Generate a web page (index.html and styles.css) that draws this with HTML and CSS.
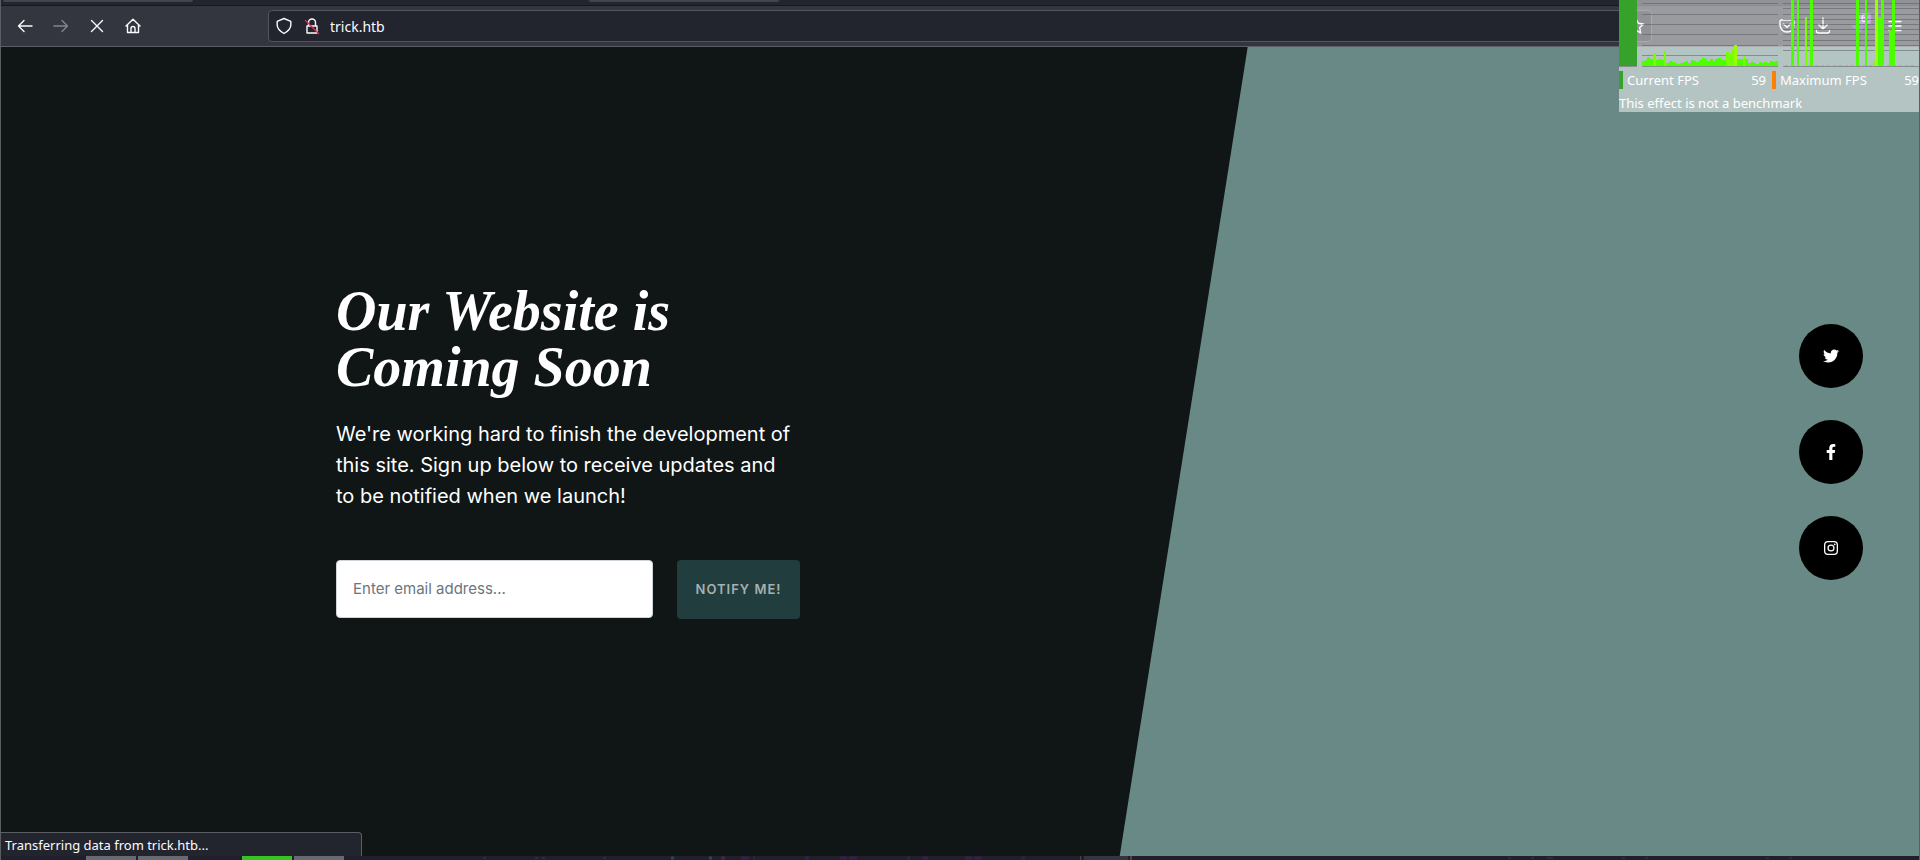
FILE: index.html
```html
<!DOCTYPE html>
<html lang="en">
<head>
<meta charset="utf-8">
<title>trick.htb</title>
<link rel="stylesheet" href="styles.css">
</head>
<body>
<div class="window">
  <div class="tabstrip"><span class="tab"></span><span class="tab tab-active"></span></div>
  <header class="toolbar">
    <nav class="nav" aria-label="Browser">
      <button class="tool" aria-label="Back"><svg viewBox="0 0 16 16"><path d="M15 8H1.500M7 2.500L1.500 8 7 13.500"/></svg></button>
      <button class="tool tool-off" aria-label="Forward"><svg viewBox="0 0 16 16"><path d="M1 8h13.500M9 2.500L14.500 8 9 13.500"/></svg></button>
      <button class="tool" aria-label="Stop"><svg viewBox="0 0 16 16"><path d="M2.500 2.500l11 11M13.500 2.500l-11 11"/></svg></button>
      <button class="tool" aria-label="Home"><svg viewBox="0 0 16 16"><path d="M1 8L8 1.200 15 8M2.500 7v7.500h11V7M6 14.500v-4a2 2 0 0 1 4 0v4"/></svg></button>
    </nav>
    <div class="urlbar">
      <svg class="icon" viewBox="0 0 16 16"><path d="M8 .5L14.800 3.300V7c0 4-3.200 6.500-6.800 8.500C4.400 13.500 1.200 11 1.200 7V3.300z"/></svg>
      <svg class="icon" viewBox="0 0 16 16"><path d="M4.500 8V4.500a3.500 3.500 0 0 1 7 0V8M3 8h10v7H3z"/><path class="strike" d="M1.500 2.500l13 13"/></svg>
      <input class="url" aria-label="Address" value="trick.htb">
      <button class="tool star" aria-label="Bookmark"><svg viewBox="0 0 16 16"><path d="M8 .5l2.300 4.800 5.200.7-3.800 3.600 1 5.200L8 12.300l-4.700 2.500 1-5.200L.5 6l5.200-.7z"/></svg></button>
    </div>
    <div class="actions">
      <button class="tool" aria-label="Pocket"><svg viewBox="0 0 16 16"><path d="M2.500 2h11a1.500 1.500 0 0 1 1.500 1.500V7A7 7 0 0 1 1 7V3.500A1.500 1.500 0 0 1 2.500 2zM4.500 6L8 9.300 11.500 6"/></svg></button>
      <button class="tool" aria-label="Downloads"><svg viewBox="0 0 16 16"><path d="M8 0v10.500M3.500 6.500L8 11l4.500-4.500M1.500 12.500v.5a2 2 0 0 0 2 2h9a2 2 0 0 0 2-2v-.5"/></svg></button>
      <button class="tool" aria-label="Extension"><svg viewBox="0 0 16 16"><path class="ext" d="M0 8l4-2 3-3 3 3 5 2-4 3-1 3-3 1-3-4z"/><rect class="ext-badge" x="8" y="-5" width="12" height="11" rx="2"/><text class="ext-num" x="10" y="4">6</text></svg></button>
      <button class="tool" aria-label="Menu"><svg viewBox="0 0 16 16"><path d="M2 3.500h12M2 8h12M2 12.500h12"/></svg></button>
    </div>
  </header>
  <main class="page">
    <section class="masthead">
      <div class="content">
        <h1 class="title">Our Website is Coming Soon</h1>
        <p class="lead">We're working hard to finish the development of this site. Sign up below to receive updates and to be notified when we launch!</p>
        <form class="signup">
          <input class="email" type="email" aria-label="Email address" placeholder="Enter email address...">
          <button class="notify" type="button">Notify Me!</button>
        </form>
      </div>
    </section>
    <aside class="social">
      <a class="social-link" href="#" aria-label="Twitter"><svg viewBox="0 0 512 512"><path d="M459.370 151.716c.325 4.548.325 9.097.325 13.645 0 138.720-105.583 298.558-298.558 298.558-59.452 0-114.680-17.219-161.137-47.106 8.447.974 16.568 1.299 25.340 1.299 49.055 0 94.213-16.568 130.274-44.832-46.132-.975-84.792-31.188-98.112-72.772 6.498.974 12.995 1.624 19.818 1.624 9.421 0 18.843-1.300 27.614-3.573-48.081-9.747-84.143-51.980-84.143-102.985v-1.299c13.969 7.797 30.214 12.670 47.431 13.319-28.264-18.843-46.781-51.005-46.781-87.391 0-19.492 5.197-37.360 14.294-52.954 51.655 63.675 129.300 105.258 216.365 109.807-1.624-7.797-2.599-15.918-2.599-24.040 0-57.828 46.782-104.934 104.934-104.934 30.213 0 57.502 12.670 76.670 33.137 23.715-4.548 46.456-13.320 66.599-25.340-7.798 24.366-24.366 44.833-46.132 57.827 21.117-2.273 41.584-8.122 60.426-16.243-14.292 20.791-32.161 39.308-52.628 54.253z"/></svg></a>
      <a class="social-link" href="#" aria-label="Facebook"><svg viewBox="0 0 320 512"><path d="M279.140 288l14.220-92.660h-88.910v-60.130c0-25.350 12.420-50.060 52.240-50.060h40.420V6.260S260.430 0 225.360 0c-73.220 0-121.080 44.380-121.080 124.720v70.620H22.890V288h81.390v224h100.170V288z"/></svg></a>
      <a class="social-link" href="#" aria-label="Instagram"><svg viewBox="0 0 16 16"><path fill-rule="evenodd" d="M5 1h6a4 4 0 0 1 4 4v6a4 4 0 0 1-4 4H5a4 4 0 0 1-4-4V5a4 4 0 0 1 4-4zm0 1.300A2.700 2.700 0 0 0 2.300 5v6A2.700 2.700 0 0 0 5 13.700h6a2.700 2.700 0 0 0 2.700-2.700V5A2.700 2.700 0 0 0 11 2.300zM8 4.400a3.600 3.600 0 1 1 0 7.200 3.600 3.600 0 0 1 0-7.200zm0 1.300a2.300 2.300 0 1 0 0 4.600 2.300 2.300 0 0 0 0-4.600z"/><circle cx="11.700" cy="4.300" r=".9"/></svg></a>
    </aside>
    <div class="status">Transferring data from trick.htb...</div>
  </main>
  <footer class="desktop">
    <span class="task"></span><span class="task"></span><span class="task task-on"></span><span class="task"></span>
    <svg class="marks" viewBox="345 0 1574 4" preserveAspectRatio="xMinYMin slice" aria-hidden="true">
      <path stroke="#3a3c48" d="M482 2h3M534 2h3M541 2h3M602 2h3M1507 2h3M1530 2h3M1546 2h6M1621 2h3M1644 2h3M1765 2h3M1788 2h3"/>
      <path stroke="#2a4a50" stroke-width="3" d="M670 2h3M708 2h3"/>
      <path stroke="#4a2835" stroke-width="3" d="M720 2h4"/>
      <path stroke="#35204a" stroke-width="3" d="M740 2h8M752 2h2M804 2h4M839 2h7M848 2h8M906 2h3M921 2h6M964 2h7M973 2h8M1021 2h3"/>
      <path stroke="#4a4b58" d="M1083 1h44M1083 3h44"/>
      <path stroke="#54423e" stroke-width="4" d="M1079 2h1M1129 2h2"/>
    </svg>
  </footer>
</div>
<div class="fps">
  <svg class="graph" id="graph" viewBox="0 0 300 67" aria-hidden="true"></svg>
  <div class="legend">
    <div class="entry"><span class="key"></span><span>Current FPS</span><span class="num">59</span></div>
    <div class="entry"><span class="key key-max"></span><span>Maximum FPS</span><span class="num">59</span></div>
  </div>
  <div class="note">This effect is not a benchmark</div>
</div>
<script src="graph.js"></script>
</body>
</html>
```
FILE: styles.css
```css
* { box-sizing: border-box; }
body { margin: 0; font-family: "Noto Sans", sans-serif; font-size: 13px; color: #fbfbfe; }
button, input { font: inherit; color: inherit; border: 0; padding: 0; background: none; }
.window { display: flex; flex-direction: column; height: 100vh; border: solid #5a5d61; border-width: 0 1px; background: #101616; }
.tabstrip { display: flex; gap: 396px; height: 6px; padding-left: 2px; background: #23252e; border-bottom: 1px solid #17181e; flex: none; }
.tab { width: 190px; height: 2px; background: #42444d; border-radius: 0 0 4px 4px; }
.toolbar { display: flex; align-items: center; height: 41px; flex: none; background: #33363e; border-bottom: 1px solid #5b5e64; padding: 0 16px; }
.nav { display: flex; gap: 20px; }
.tool { display: block; width: 16px; height: 16px; }
.tool svg, .icon { display: block; width: 16px; height: 16px; fill: none; stroke: #fbfbfe; stroke-width: 1.400; stroke-linejoin: round; stroke-linecap: round; overflow: visible; }
.tool-off { opacity: .4; }
.urlbar { display: flex; align-items: center; flex: 1; height: 32px; margin-left: 127px; padding: 0 7px; gap: 12px; background: #23252e; border: 1px solid #53565d; border-radius: 4px; }
.icon .strike { stroke: #e22850; }
.url { flex: 1; min-width: 0; height: 24px; margin-left: -2px; font-size: 14px; }
.actions { display: flex; gap: 20px; margin-left: 127px; }
.tool .ext { fill: #5b3fa8; stroke: none; }
.tool .ext-badge { fill: #8757c8; stroke: none; }
.tool .ext-num { fill: #fff; stroke: none; font-size: 10px; }
.page { position: relative; flex: 1; min-height: 0; display: flex; align-items: center; background: #688986; }
.masthead { display: flex; align-items: center; width: 65%; height: 100%; padding-left: 335px; background: #101616; clip-path: polygon(0 0, 100% 0, calc(100% - 128px) 100%, 0 100%); }
.content { width: 464px; padding-bottom: 2px; }
.title { margin: 0 0 24px; font: italic bold 56px/56px "Liberation Serif", serif; max-width: 400px; color: #fff; }
.lead { max-width: 460px; margin: 0 0 48px; font: 20px/31px "Inter", sans-serif; color: #fff; }
.signup { display: flex; gap: 24px; }
.email { flex: 1; min-width: 0; height: 58px; padding: 0 16px; background: #fff; border: 1px solid #ced4da; border-radius: 4px; font: 15px "Inter", sans-serif; color: #212529; }
.email::placeholder { color: #6c757d; opacity: 1; }
.notify { width: 123px; height: 59px; background: #213d3d; border-radius: 4px; color: #a6b0b0; font: 600 13px "Inter", sans-serif; letter-spacing: 1px; text-transform: uppercase; }
.social { display: flex; flex-direction: column; gap: 32px; margin: 0 56px 0 auto; }
.social-link { display: flex; align-items: center; justify-content: center; width: 64px; height: 64px; border-radius: 50%; background: #000; }
.social-link svg { height: 16px; fill: #fff; }
.status { position: absolute; left: 0; bottom: 0; width: 361px; height: 24px; padding-left: 4px; line-height: 24px; background: #23252e; border: solid #5b5e64; border-width: 1px 1px 0 0; border-radius: 0 4px 0 0; }
.desktop { display: flex; gap: 2px; height: 4px; flex: none; padding-left: 85px; background: #1f202c; }
.task { flex: none; width: 50px; height: 4px; background: #686a72; }
.task-on { margin-left: 52px; background: #35c421; }
.marks { flex: 1; min-width: 0; height: 4px; }
.fps { position: absolute; top: 0; right: 1px; width: 300px; height: 112px; background: rgba(255, 255, 255, .5); color: #fff; }
.graph { display: block; width: 300px; height: 67px; }
.legend { display: flex; gap: 6px; height: 26px; white-space: nowrap; }
.entry { display: flex; align-items: center; flex: 1; gap: 4px; }
.key { width: 4px; height: 18px; background: #37a22b; }
.key-max { background: #ff7f00; }
.num { margin-left: auto; }
.note { line-height: 20px; }
```
FILE: graph.js
```js
const svg = document.getElementById("graph");
const bar = (x, y, w, h, fill) => {
  const r = document.createElementNS("http://www.w3.org/2000/svg", "rect");
  for (const [k, v] of Object.entries({ x, y, width: w, height: h, fill })) r.setAttribute(k, v);
  svg.append(r);
};
const line = "rgba(85, 85, 92, .5)";
const green = "#4cff00";

bar(0, 0, 18, 66, "#37a22b");
bar(0, 66, 18, 1, line);

// Frame time history
for (const y of [3, 14, 24, 34, 45, 55, 66]) bar(23, y, 136, 1, line);
const times = [5, 6, 9, 7, 13, 6, 7, 6, 15, 3, 5, 4, 3, 2, 3, 4, 5, 3, 6, 5, 4, 6, 8, 7, 5, 7, 5, 7, 8, 6, 6, 14, 12, 17, 21, 7, 7, 10, 7, 3, 4, 3, 2, 4, 3, 4, 3, 5, 4, 5];
times.forEach((t, i) => {
  const x = Math.round(23 + i * 2.72);
  const end = Math.round(23 + (i + 1) * 2.72);
  bar(x, 66 - t, end - x, t, t > 18 ? "#99ff00" : t > 9 ? "#77ff00" : green);
});

// Frame rate distribution
for (const y of [3, 8, 14, 19, 24, 29, 34, 40, 45, 50, 66]) bar(164, y, 136, 1, line);
for (let x = 166; x < 298; x += 6) bar(x, 65, 3, 1, green);
const spikes = [
  [172, 0, 3, green], [178, 0, 2, green], [186, 17, 2, "#77ff00"], [191, 0, 3, green],
  [237, 0, 3, green], [246, 0, 2, green], [254, 62, 2, "#77ff00"], [256, 0, 3, "#99ff00"],
  [259, 17, 3, green], [262, 0, 3, green], [270, 30, 3, green], [273, 0, 3, green]
];
for (const [x, y, w, fill] of spikes) bar(x, y, w, 66 - y, fill);
```
